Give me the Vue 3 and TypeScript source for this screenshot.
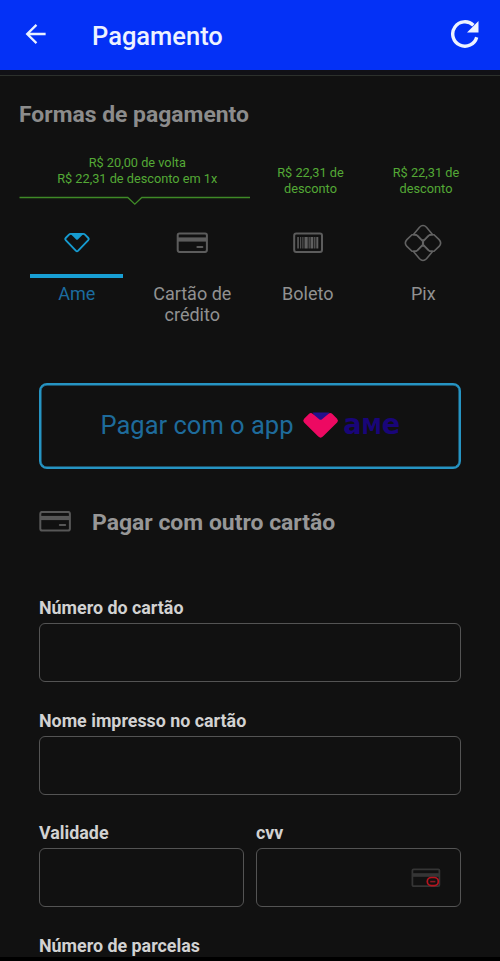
<script setup lang="ts">
interface Offer {
  lines: string[]
  wide?: boolean
}

interface PaymentTab {
  id: 'ame' | 'card' | 'boleto' | 'pix'
  lines: string[]
}

const offers: Offer[] = [
  { lines: ['R$ 20,00 de volta', 'R$ 22,31 de desconto em 1x'], wide: true },
  { lines: ['R$ 22,31 de', 'desconto'] },
  { lines: ['R$ 22,31 de', 'desconto'] },
]

const tabs: PaymentTab[] = [
  { id: 'ame', lines: ['Ame'] },
  { id: 'card', lines: ['Cartão de', 'crédito'] },
  { id: 'boleto', lines: ['Boleto'] },
  { id: 'pix', lines: ['Pix'] },
]

const active: PaymentTab['id'] = 'ame'
</script>

<template>
  <div class="screen">
    <header class="bar">
      <svg class="back" viewBox="0 0 24 24" fill="none" stroke="#e9f0ff" stroke-width="2.5">
        <path d="M22.5 12H2.5M12.5 2 2.4 12 12.5 22" />
      </svg>
      <h1 class="title">Pagamento</h1>
      <svg class="reload" viewBox="0 0 28 28">
        <path d="M25.7 17.2A12.2 12.2 0 1 1 22.4 5.2" fill="none" stroke="#eef3ff" stroke-width="3.4" />
        <path d="M27.5 1V12.5H16z" fill="#eef3ff" />
      </svg>
    </header>
    <div class="divider"></div>

    <main class="content">
      <h2 class="heading">Formas de pagamento</h2>

      <div class="offers">
        <div v-for="(offer, i) in offers" :key="i" class="offer" :class="{ wide: offer.wide }">
          <p v-for="line in offer.lines" :key="line">{{ line }}</p>
        </div>
      </div>
      <svg class="pointer" viewBox="0 0 231 10" fill="none" stroke="#3f8a27" stroke-width="1.3">
        <path d="M0.5 1.5H108.8L115.8 8.1L122.8 1.5H231" />
      </svg>

      <nav class="tabs">
        <div v-for="tab in tabs" :key="tab.id" class="tab" :class="{ active: tab.id === active }">
          <div class="tab-icon">
            <svg v-if="tab.id === 'ame'" width="28" height="22" viewBox="0 0 28 22">
              <path d="M7.6 1.9H20.4Q21.3 1.9 22 2.6L25.3 6Q26.3 7.1 25.3 8.1L15.2 18.6Q14 19.7 12.8 18.6L2.7 8.1Q1.7 7.1 2.7 6L6 2.6Q6.7 1.9 7.6 1.9Z" fill="none" stroke="#169bd0" stroke-width="1.9" />
              <path d="M7.6 2H20.4L18.6 3.8L14.8 7.5Q14 8.2 13.2 7.5L9.4 3.8Z" fill="#169bd0" />
            </svg>
            <svg v-else-if="tab.id === 'card'" width="32" height="22" viewBox="0 0 32 22">
              <rect x="1.7" y="1.6" width="29.2" height="18.3" rx="1.8" fill="none" stroke="#5c5c5c" stroke-width="2" />
              <path d="M1.5 7.5H31" stroke="#5c5c5c" stroke-width="4.2" />
              <path d="M21.4 15H26.4" stroke="#5c5c5c" stroke-width="2" stroke-linecap="round" />
            </svg>
            <svg v-else-if="tab.id === 'boleto'" width="30" height="22" viewBox="0 0 30 22">
              <rect x="1.2" y="1.6" width="27.8" height="18.3" rx="2" fill="none" stroke="#5c5c5c" stroke-width="2" />
              <g fill="#606060">
                <rect x="4.3" y="5" width="1.5" height="11.5" />
                <rect x="7.2" y="5" width="1" height="11.5" />
                <rect x="9.4" y="5" width="1" height="11.5" />
                <rect x="11.5" y="5" width="3.2" height="11.5" />
                <rect x="15.6" y="5" width="1.1" height="11.5" />
                <rect x="17.5" y="5" width="2.8" height="11.5" />
                <rect x="21.2" y="5" width="1.2" height="11.5" />
                <rect x="23.3" y="5" width="2" height="11.5" />
              </g>
            </svg>
            <svg v-else width="38" height="38" viewBox="0 0 38 38" fill="none" stroke="#626262" stroke-width="1.6">
              <path d="M9.3 10.7H11.1Q12.6 10.7 13.7 11.8L17.6 15.7Q19 17 20.4 15.7L24.3 11.8Q25.4 10.7 26.9 10.7H28.7M9.3 10.7L15.5 3.2Q19 -.2 22.5 3.2L28.7 10.7" />
              <path d="M9.3 27.3H11.1Q12.6 27.3 13.7 26.2L17.6 22.3Q19 21 20.4 22.3L24.3 26.2Q25.4 27.3 26.9 27.3H28.7M9.3 27.3L15.5 34.8Q19 38.2 22.5 34.8L28.7 27.3" />
              <path d="M8 10.7H10.6Q12.2 10.7 13.3 11.8L18.4 17Q20.3 19 18.4 21L13.3 26.2Q12.2 27.3 10.6 27.3H8L2.9 22.4Q-.2 19 2.9 15.6Z" />
              <path d="M30 10.7H27.4Q25.8 10.7 24.7 11.8L19.6 17Q17.7 19 19.6 21L24.7 26.2Q25.8 27.3 27.4 27.3H30L35.1 22.4Q38.2 19 35.1 15.6Z" />
            </svg>
          </div>
          <div class="tab-label">
            <span v-for="line in tab.lines" :key="line">{{ line }}</span>
          </div>
        </div>
      </nav>

      <section class="form">
        <button class="ame-button" type="button">
          <span class="ame-text">Pagar com o app</span>
          <svg class="ame-logo" width="102" height="44" viewBox="0 -7 102 44">
            <path d="M10.6 1.4H27.4L22.6 9.4H14.6Z" fill="#22108c" />
            <path transform="translate(.6 .4)" d="M6.3 2.7Q8.2 .5 10.3 2.6L16.6 7.8Q18 8.9 19.4 7.8L25.7 2.6Q27.8 .5 29.8 2.7L34.5 7.3Q36.3 9.2 34.5 11.1L20.3 25.2Q18 27.3 15.7 25.2L1.5 11.1Q-.3 9.2 1.5 7.3Z" fill="#ed0962" />
            <text x="41.2" y="23.2" textLength="57" lengthAdjust="spacingAndGlyphs">a<tspan class="small-cap">m</tspan>e</text>
          </svg>
        </button>

        <div class="other">
          <svg width="32" height="22" viewBox="0 0 32 22">
            <rect x="1.3" y=".9" width="29.6" height="18.7" rx="1.8" fill="none" stroke="#575757" stroke-width="2" />
            <path d="M1 7H31" stroke="#575757" stroke-width="4.2" />
            <path d="M20.8 14H26.2" stroke="#575757" stroke-width="2" stroke-linecap="round" />
          </svg>
          <h3>Pagar com outro cartão</h3>
        </div>

        <label class="field">
          <span class="label">Número do cartão</span>
          <input type="text" />
        </label>
        <label class="field">
          <span class="label">Nome impresso no cartão</span>
          <input type="text" />
        </label>
        <div class="pair">
          <label class="field">
            <span class="label">Validade</span>
            <input type="text" />
          </label>
          <label class="field">
            <span class="label">cvv</span>
            <span class="cvv">
              <svg width="30" height="20" viewBox="0 0 30 20" fill="none">
                <rect x="1.4" y="1.3" width="27" height="16.8" rx="1.2" stroke="#353535" stroke-width="1.8" />
                <path d="M1 7H28" stroke="#353535" stroke-width="3.7" />
                <rect x="16.3" y="9.5" width="11" height="8.2" rx="4.1" fill="#111" stroke="#b8141f" stroke-width="1.7" />
                <path d="M19.2 13.6H24.4" stroke="#8d1921" stroke-width="1.6" />
              </svg>
            </span>
          </label>
        </div>
        <span class="label">Número de parcelas</span>
      </section>
    </main>
    <div class="bottom"></div>
  </div>
</template>

<style>
body {
  margin: 0;
  background: #111;
}
</style>

<style scoped>
.screen {
  display: flex;
  flex-direction: column;
  width: 500px;
  height: 961px;
  overflow: hidden;
  background: #111;
  font-family: Roboto, "Liberation Sans", sans-serif;
  box-sizing: border-box;
}
h1, h2, h3, p {
  margin: 0;
}
svg {
  display: block;
  flex: none;
}
.bar {
  flex: none;
  display: flex;
  align-items: center;
  height: 70px;
  padding: 0 21px 0 25px;
  box-sizing: border-box;
  background: #0431f6;
}
.back {
  width: 22px;
  height: 22px;
  margin-top: -2px;
}
.title {
  flex: 1;
  margin: 1px 0 0 45px;
  color: #edf2ff;
  font-size: 25.5px;
  font-weight: 500;
  line-height: 30px;
}
.reload {
  width: 28px;
  height: 28px;
  margin-top: -2px;
}
.divider {
  flex: none;
  height: 5px;
  background: #111116;
  border-bottom: 1px solid #2c302c;
}
.content {
  flex: 1;
  min-height: 0;
  overflow: hidden;
  padding: 24px 19px 0;
}
.heading {
  height: 30px;
  color: #8c8c8c;
  font-size: 22.9px;
  font-weight: 700;
  line-height: 30px;
}
.offers {
  display: grid;
  grid-template-columns: repeat(4, 1fr);
  align-items: end;
  height: 66px;
  color: #54a936;
  font-size: 12.75px;
  line-height: 15.5px;
  text-align: center;
}
.offer {
  padding-left: 5.5px;
  white-space: nowrap;
}
.offer.wide {
  grid-column: span 2;
  padding-bottom: 10px;
}
.pointer {
  width: 231px;
  height: 10px;
}
.tabs {
  display: grid;
  grid-template-columns: repeat(4, 1fr);
  height: 127px;
  padding-top: 6px;
  box-sizing: border-box;
}
.tab {
  display: flex;
  flex-direction: column;
  align-items: center;
}
.tab-icon {
  display: flex;
  align-items: center;
  justify-content: center;
  width: 93px;
  height: 62px;
  border-bottom: 4px solid transparent;
}
.tab-label {
  display: flex;
  flex-direction: column;
  align-items: center;
  margin-top: 5px;
  color: #919191;
  font-size: 18px;
  line-height: 21px;
}
.active .tab-icon {
  border-color: #189fd4;
}
.active .tab-label {
  color: #1c6c9f;
}
.form {
  padding: 0 20px;
}
.ame-button {
  display: flex;
  align-items: center;
  justify-content: center;
  width: 100%;
  height: 86px;
  margin-top: 50px;
  padding: 0 0 2px 5px;
  box-sizing: border-box;
  background: transparent;
  border: 2px solid #2694c3;
  border-radius: 8px;
  box-shadow: inset 0 0 0 0.5px #2694c3;
  font-family: inherit;
}
.ame-text {
  color: #1e6b9b;
  font-size: 25.5px;
  line-height: 30px;
}
.ame-logo {
  margin: 2px 0 0 9px;
}
.ame-logo text {
  fill: #190579;
  font-family: "DejaVu Sans", sans-serif;
  font-size: 28px;
  font-weight: 700;
}
.ame-logo .small-cap {
  font-variant: small-caps;
  font-size: 30px;
}
.other {
  display: flex;
  align-items: center;
  gap: 21px;
  height: 30px;
  margin: 38px 0 60px;
}
.other h3 {
  margin-top: 2px;
  color: #979797;
  font-size: 22.95px;
  font-weight: 700;
  line-height: 30px;
}
.field {
  display: block;
  height: 112.6px;
}
.label {
  display: block;
  height: 26.3px;
  color: #d2d2d2;
  font-size: 17.85px;
  font-weight: 700;
  line-height: 21px;
}
.field input,
.cvv {
  display: block;
  width: 100%;
  height: 59px;
  box-sizing: border-box;
  background: transparent;
  border: 1px solid #545454;
  border-radius: 6px;
}
.pair {
  display: grid;
  grid-template-columns: 1fr 1fr;
  gap: 12px;
}
.cvv {
  display: flex;
  align-items: center;
  justify-content: flex-end;
  padding-right: 19px;
}
.bottom {
  flex: none;
  height: 4px;
  background: #000;
}
</style>
